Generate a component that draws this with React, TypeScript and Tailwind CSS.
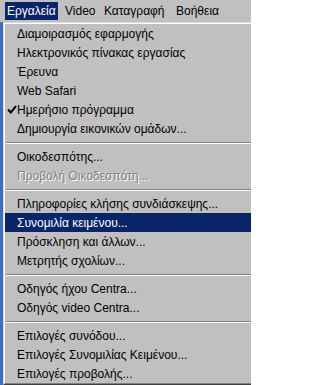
import React from "react";

type Item =
  | { kind: "item"; label: string; checked?: boolean; disabled?: boolean; active?: boolean }
  | { kind: "sep" };

const items: Item[] = [
  { kind: "item", label: "Διαμοιρασμός εφαρμογής" },
  { kind: "item", label: "Ηλεκτρονικός πίνακας εργασίας" },
  { kind: "item", label: "Έρευνα" },
  { kind: "item", label: "Web Safari" },
  { kind: "item", label: "Ημερήσιο πρόγραμμα", checked: true },
  { kind: "item", label: "Δημιουργία εικονικών ομάδων..." },
  { kind: "sep" },
  { kind: "item", label: "Οικοδεσπότης..." },
  { kind: "item", label: "Προβολή Οικοδεσπότη...", disabled: true },
  { kind: "sep" },
  { kind: "item", label: "Πληροφορίες κλήσης συνδιάσκεψης..." },
  { kind: "item", label: "Συνομιλία κειμένου...", active: true },
  { kind: "item", label: "Πρόσκληση και άλλων..." },
  { kind: "item", label: "Μετρητής σχολίων..." },
  { kind: "sep" },
  { kind: "item", label: "Οδηγός ήχου Centra..." },
  { kind: "item", label: "Οδηγός video Centra..." },
  { kind: "sep" },
  { kind: "item", label: "Επιλογές συνόδου..." },
  { kind: "item", label: "Επιλογές Συνομιλίας Κειμένου..." },
  { kind: "item", label: "Επιλογές προβολής..." },
];

function Check() {
  return (
    <svg width="10" height="9" viewBox="0 0 10 9" className="block">
      <path d="M1 4.5 L3.8 7.5 L9 1.2" fill="none" stroke="#000" strokeWidth="2" />
    </svg>
  );
}

export default function App() {
  return (
    <div className="w-[251px] h-[385px] overflow-hidden bg-[#c0c0c0] text-[12px] leading-none text-black font-['Liberation_Sans',Arial,sans-serif]">
      {/* Menu bar */}
      <div className="h-[22px] flex items-start pl-[5px] pt-[2px]">
        <div className="h-[18px] w-[53px] pl-[2px] flex items-center bg-[#0a246a] text-white">Εργαλεία</div>
        <div className="h-[18px] w-[39px] pl-[7px] flex items-center">Video</div>
        <div className="h-[18px] w-[72px] pl-[7px] flex items-center">Καταγραφή</div>
        <div className="h-[18px] pl-[7px] flex items-center">Βοήθεια</div>
      </div>
      {/* Dropdown area */}
      <div className="flex h-[363px]">
        <div className="w-[3px] bg-[#3d6fc0]" />
        <div className="flex-1 border-t border-l border-b border-t-[#dcdcdc] border-l-[#dcdcdc] border-b-[#404040]">
          <div className="h-full border-t border-l border-b border-t-white border-l-white border-b-[#808080] flex flex-col">
            {items.map((it, i) =>
              it.kind === "sep" ? (
                <div key={i} className="h-[9px] flex flex-col justify-center pl-px">
                  <div className="h-px bg-[#808080]" />
                  <div className="h-px bg-white" />
                </div>
              ) : (
                <div
                  key={i}
                  className={
                    "h-[19px] flex items-center whitespace-nowrap " +
                    (it.active ? "bg-[#0a246a] text-white" : "")
                  }
                >
                  <div className="w-[12px] flex justify-center pl-[1px]">{it.checked ? <Check /> : null}</div>
                  <span
                    className={
                      it.disabled ? "text-[#808080] [text-shadow:1px_1px_0_#ffffff]" : ""
                    }
                  >
                    {it.label}
                  </span>
                </div>
              )
            )}
          </div>
        </div>
      </div>
    </div>
  );
}
